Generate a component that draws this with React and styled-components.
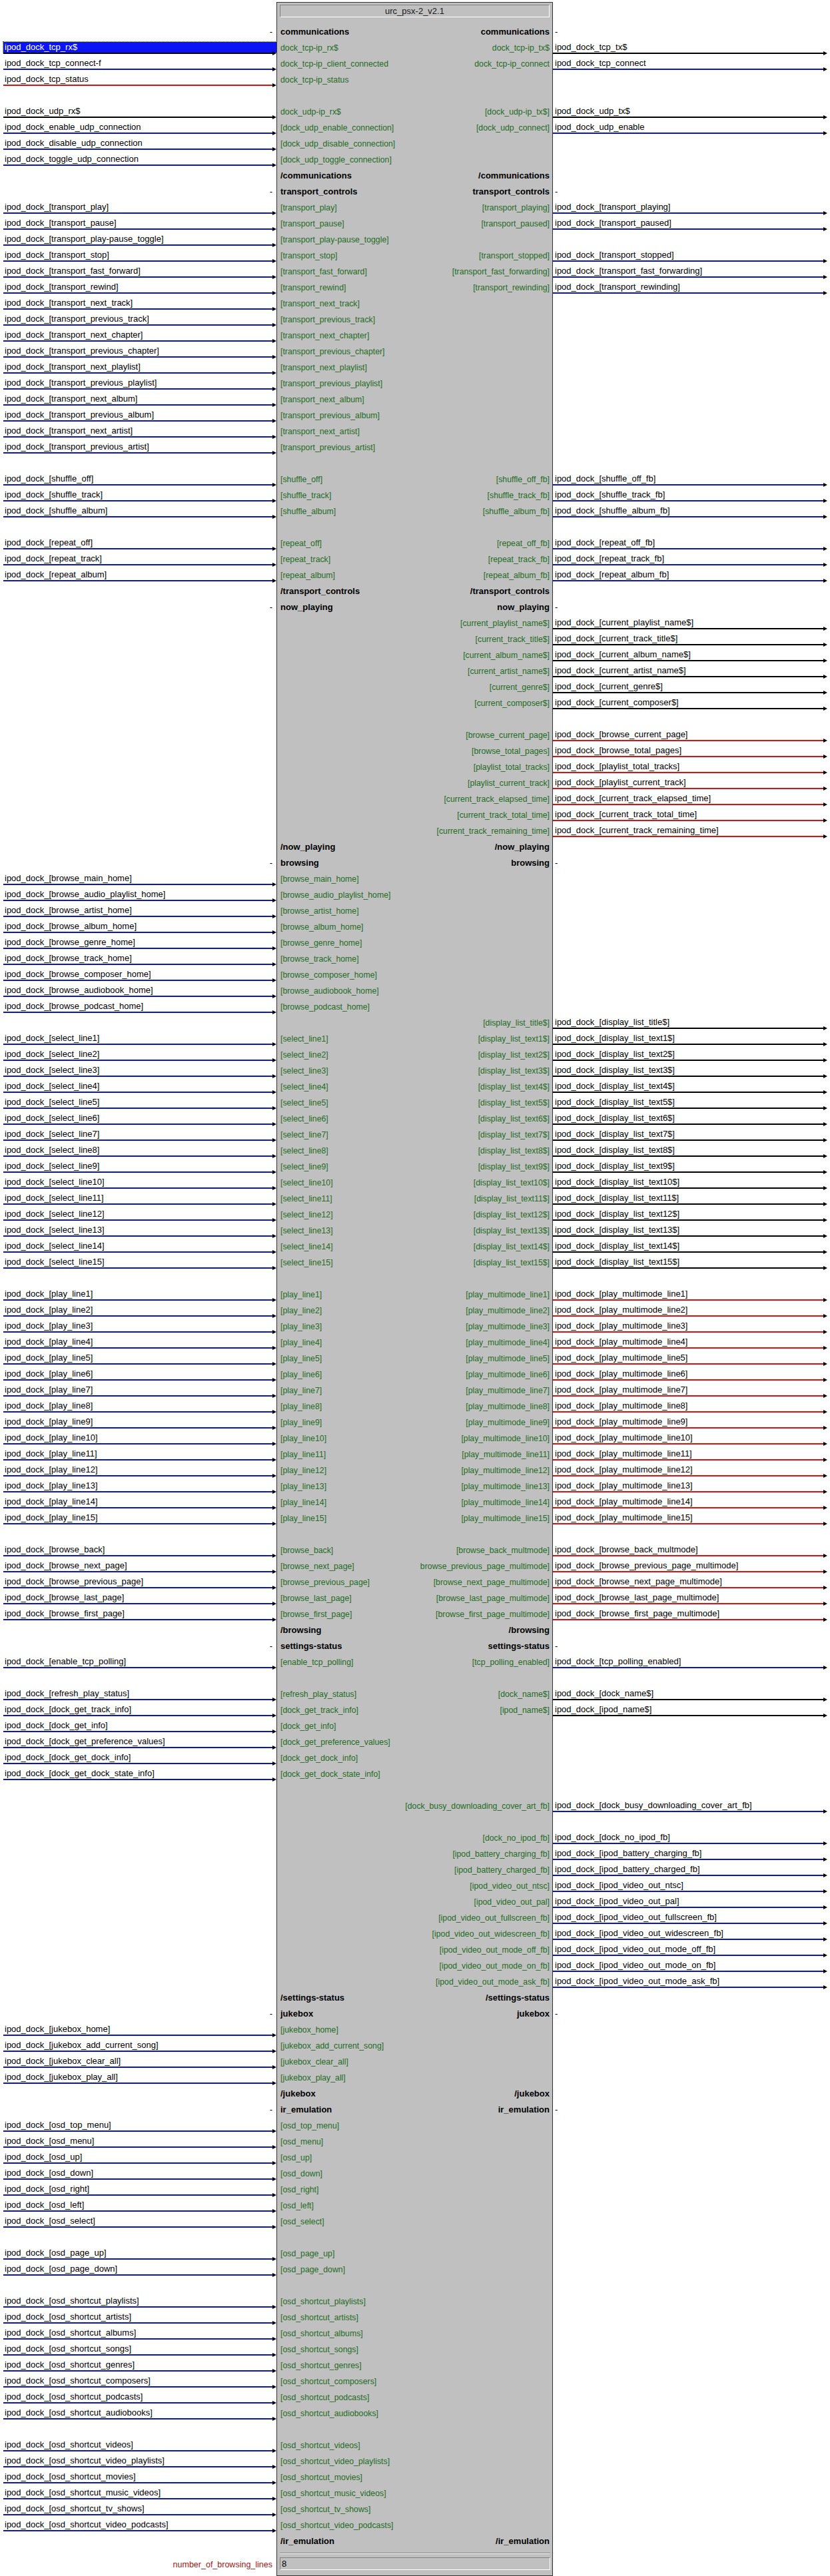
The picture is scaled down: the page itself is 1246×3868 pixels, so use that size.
import React from "react";
import styled, { createGlobalStyle } from "styled-components";

const DIGITAL = "d";
const SERIAL = "s";
const ANALOG = "a";

const wireColors = {
  d: "#0a14c8",
  s: "#000000",
  a: "#dd1010",
};

// ipod_dock_[x] on the left, [x] on the symbol
const input = (name, type = DIGITAL) => ({
  left: { name: `ipod_dock_[${name}]`, type },
  pinLeft: `[${name}]`,
});

const output = (name, type = DIGITAL) => ({
  pinRight: `[${name}]`,
  right: { name: `ipod_dock_[${name}]`, type },
});

const pair = (inName, outName, outType = DIGITAL) => ({
  ...input(inName),
  ...output(outName, outType),
});

const open = (title) => ({ section: title, open: true });
const close = (title) => ({ section: `/${title}` });
const blank = {};
const range = (n, fn) => Array.from({ length: n }, (_, i) => fn(i + 1));

const rows = [
  open("communications"),
  {
    left: { name: "ipod_dock_tcp_rx$", type: SERIAL },
    pinLeft: "dock_tcp-ip_rx$",
    pinRight: "dock_tcp-ip_tx$",
    right: { name: "ipod_dock_tcp_tx$", type: SERIAL },
    selected: true,
  },
  {
    left: { name: "ipod_dock_tcp_connect-f", type: DIGITAL },
    pinLeft: "dock_tcp-ip_client_connected",
    pinRight: "dock_tcp-ip_connect",
    right: { name: "ipod_dock_tcp_connect", type: DIGITAL },
  },
  {
    left: { name: "ipod_dock_tcp_status", type: ANALOG },
    pinLeft: "dock_tcp-ip_status",
  },
  blank,
  {
    left: { name: "ipod_dock_udp_rx$", type: SERIAL },
    pinLeft: "dock_udp-ip_rx$",
    pinRight: "[dock_udp-ip_tx$]",
    right: { name: "ipod_dock_udp_tx$", type: SERIAL },
  },
  {
    left: { name: "ipod_dock_enable_udp_connection", type: DIGITAL },
    pinLeft: "[dock_udp_enable_connection]",
    pinRight: "[dock_udp_connect]",
    right: { name: "ipod_dock_udp_enable", type: DIGITAL },
  },
  {
    left: { name: "ipod_dock_disable_udp_connection", type: DIGITAL },
    pinLeft: "[dock_udp_disable_connection]",
  },
  {
    left: { name: "ipod_dock_toggle_udp_connection", type: DIGITAL },
    pinLeft: "[dock_udp_toggle_connection]",
  },
  close("communications"),

  open("transport_controls"),
  pair("transport_play", "transport_playing"),
  pair("transport_pause", "transport_paused"),
  input("transport_play-pause_toggle"),
  pair("transport_stop", "transport_stopped"),
  pair("transport_fast_forward", "transport_fast_forwarding"),
  pair("transport_rewind", "transport_rewinding"),
  ...[
    "next_track",
    "previous_track",
    "next_chapter",
    "previous_chapter",
    "next_playlist",
    "previous_playlist",
    "next_album",
    "previous_album",
    "next_artist",
    "previous_artist",
  ].map((n) => input(`transport_${n}`)),
  blank,
  ...["off", "track", "album"].map((n) => pair(`shuffle_${n}`, `shuffle_${n}_fb`)),
  blank,
  ...["off", "track", "album"].map((n) => pair(`repeat_${n}`, `repeat_${n}_fb`)),
  close("transport_controls"),

  open("now_playing"),
  ...[
    "current_playlist_name$",
    "current_track_title$",
    "current_album_name$",
    "current_artist_name$",
    "current_genre$",
    "current_composer$",
  ].map((n) => output(n, SERIAL)),
  blank,
  ...[
    "browse_current_page",
    "browse_total_pages",
    "playlist_total_tracks",
    "playlist_current_track",
    "current_track_elapsed_time",
    "current_track_total_time",
    "current_track_remaining_time",
  ].map((n) => output(n, ANALOG)),
  close("now_playing"),

  open("browsing"),
  ...[
    "main",
    "audio_playlist",
    "artist",
    "album",
    "genre",
    "track",
    "composer",
    "audiobook",
    "podcast",
  ].map((n) => input(`browse_${n}_home`)),
  output("display_list_title$", SERIAL),
  ...range(15, (i) => ({
    ...input(`select_line${i}`),
    ...output(`display_list_text${i}$`, SERIAL),
  })),
  blank,
  ...range(15, (i) => pair(`play_line${i}`, `play_multimode_line${i}`, ANALOG)),
  blank,
  pair("browse_back", "browse_back_multmode", ANALOG),
  {
    ...pair("browse_next_page", "browse_previous_page_multimode", ANALOG),
    pinRight: "browse_previous_page_multimode]",
  },
  pair("browse_previous_page", "browse_next_page_multimode", ANALOG),
  pair("browse_last_page", "browse_last_page_multimode", ANALOG),
  pair("browse_first_page", "browse_first_page_multimode", ANALOG),
  close("browsing"),

  open("settings-status"),
  pair("enable_tcp_polling", "tcp_polling_enabled"),
  blank,
  pair("refresh_play_status", "dock_name$", SERIAL),
  pair("dock_get_track_info", "ipod_name$", SERIAL),
  ...[
    "dock_get_info",
    "dock_get_preference_values",
    "dock_get_dock_info",
    "dock_get_dock_state_info",
  ].map((n) => input(n)),
  blank,
  output("dock_busy_downloading_cover_art_fb"),
  blank,
  ...[
    "dock_no_ipod_fb",
    "ipod_battery_charging_fb",
    "ipod_battery_charged_fb",
    "ipod_video_out_ntsc",
    "ipod_video_out_pal",
    "ipod_video_out_fullscreen_fb",
    "ipod_video_out_widescreen_fb",
    "ipod_video_out_mode_off_fb",
    "ipod_video_out_mode_on_fb",
    "ipod_video_out_mode_ask_fb",
  ].map((n) => output(n)),
  close("settings-status"),

  open("jukebox"),
  ...["home", "add_current_song", "clear_all", "play_all"].map((n) =>
    input(`jukebox_${n}`)
  ),
  close("jukebox"),

  open("ir_emulation"),
  ...["top_menu", "menu", "up", "down", "right", "left", "select"].map((n) =>
    input(`osd_${n}`)
  ),
  blank,
  input("osd_page_up"),
  input("osd_page_down"),
  blank,
  ...[
    "playlists",
    "artists",
    "albums",
    "songs",
    "genres",
    "composers",
    "podcasts",
    "audiobooks",
  ].map((n) => input(`osd_shortcut_${n}`)),
  blank,
  ...[
    "videos",
    "video_playlists",
    "movies",
    "music_videos",
    "tv_shows",
    "video_podcasts",
  ].map((n) => input(`osd_shortcut_${n}`)),
  close("ir_emulation"),
];

function SignalCell({ signal, side, selected }) {
  return (
    <Signal>
      <SignalLabel $side={side} $selected={selected}>
        {signal.name}
      </SignalLabel>
      <Wire>
        <WireBar $color={wireColors[signal.type]} />
        <Arrow />
      </Wire>
    </Signal>
  );
}

function App() {
  return (
    <>
      <GlobalStyle />
      <Diagram $rows={rows.length}>
        <SideCell $side='left' />
        <TitleCell>
          <TitleBox>urc_psx-2_v2.1</TitleBox>
        </TitleCell>
        <SideCell $side='right' />

        {rows.map((row, index) => (
          <React.Fragment key={index}>
            <SideCell $side='left'>
              {row.open && <Dash $side='left'>-</Dash>}
              {row.left && (
                <SignalCell
                  signal={row.left}
                  side='left'
                  selected={row.selected}
                />
              )}
            </SideCell>

            <BlockRow>
              {row.section ? (
                <>
                  <SectionName>{row.section}</SectionName>
                  <SectionName>{row.section}</SectionName>
                </>
              ) : (
                <>
                  <PinName>{row.pinLeft}</PinName>
                  <PinName>{row.pinRight}</PinName>
                </>
              )}
            </BlockRow>

            <SideCell $side='right'>
              {row.open && <Dash $side='right'>-</Dash>}
              {row.right && <SignalCell signal={row.right} side='right' />}
            </SideCell>
          </React.Fragment>
        ))}

        <ParamLabel>number_of_browsing_lines</ParamLabel>
        <ParamCell>
          <Etch />
          <ParamField>8</ParamField>
        </ParamCell>
        <SideCell $side='right' />
      </Diagram>
    </>
  );
}

export default App;

const GlobalStyle = createGlobalStyle`
  body {
    margin: 0;
    background: #ffffff;
    font-family: "Liberation Sans", Arial, sans-serif;
  }
`;

const Diagram = styled.div`
  display: grid;
  grid-template-columns: 415px 415px 416px;
  grid-template-rows: 33px repeat(${({ $rows }) => $rows}, 24px) 40px;
  padding-top: 3px;
  width: 1246px;
`;

const SideCell = styled.div`
  box-sizing: border-box;
  display: flex;
  flex-direction: column;
  padding: ${({ $side }) => ($side === "left" ? "0 0 0 5px" : "0 4px 0 0")};
  min-width: 0;
`;

const Dash = styled.div`
  font-size: 13px;
  line-height: 24px;
  color: #000;
  text-align: ${({ $side }) => ($side === "left" ? "right" : "left")};
  padding: ${({ $side }) => ($side === "left" ? "0 6px 0 0" : "0 0 0 3px")};
`;

const Signal = styled.div`
  display: flex;
  flex-direction: column;
  padding-top: 3px;
`;

const SignalLabel = styled.div`
  box-sizing: border-box;
  height: 16px;
  line-height: 16px;
  font-size: 13px;
  white-space: nowrap;
  padding-left: ${({ $side }) => ($side === "left" ? "2px" : "3px")};
  color: ${({ $selected }) => ($selected ? "#ffffff" : "#000000")};
  background: ${({ $selected }) => ($selected ? "#0a14f5" : "transparent")};
  outline: ${({ $selected }) => ($selected ? "1px dotted #555" : "none")};
`;

const Wire = styled.div`
  display: flex;
  align-items: center;
  height: 2px;
`;

const WireBar = styled.div`
  flex: 1;
  height: 2px;
  background: ${({ $color }) => $color};
`;

const Arrow = styled.div`
  width: 0;
  height: 0;
  flex: none;
  border-left: 6px solid #000;
  border-top: 3.5px solid transparent;
  border-bottom: 3.5px solid transparent;
`;

const BlockRow = styled.div`
  box-sizing: border-box;
  display: flex;
  justify-content: space-between;
  align-items: center;
  background: #c0c0c0;
  border-left: 1px solid #333;
  border-right: 1px solid #333;
  padding: 0 4px 0 5px;
  line-height: 24px;
  white-space: nowrap;
`;

const PinName = styled.span`
  font-size: 12.3px;
  color: #246c24;
`;

const SectionName = styled.span`
  font-size: 13px;
  font-weight: bold;
  color: #000;
`;

const TitleCell = styled.div`
  box-sizing: border-box;
  background: #c0c0c0;
  border: 1px solid #333;
  border-bottom: none;
  padding: 3px 4px 0 4px;
`;

const TitleBox = styled.div`
  box-sizing: border-box;
  height: 19px;
  line-height: 17px;
  text-align: center;
  font-size: 13px;
  color: #1a1a1a;
  border-top: 1px solid #808080;
  border-left: 1px solid #808080;
  border-bottom: 1px solid #ffffff;
  border-right: 1px solid #ffffff;
`;

const ParamLabel = styled.div`
  box-sizing: border-box;
  padding: 14px 6px 0 0;
  line-height: 18px;
  font-size: 12.5px;
  color: #a01818;
  text-align: right;
  white-space: nowrap;
`;

const ParamCell = styled.div`
  box-sizing: border-box;
  background: #c0c0c0;
  border: 1px solid #333;
  border-top: none;
  padding: 5px 3px 0 4px;
`;

const Etch = styled.div`
  border-top: 1px solid #808080;
  border-bottom: 1px solid #ffffff;
`;

const ParamField = styled.div`
  box-sizing: border-box;
  margin-top: 5px;
  height: 19px;
  line-height: 17px;
  padding-left: 2px;
  font-size: 13px;
  color: #000;
  border-top: 1px solid #808080;
  border-left: 1px solid #808080;
  border-bottom: 1px solid #ffffff;
  border-right: 1px solid #ffffff;
`;
